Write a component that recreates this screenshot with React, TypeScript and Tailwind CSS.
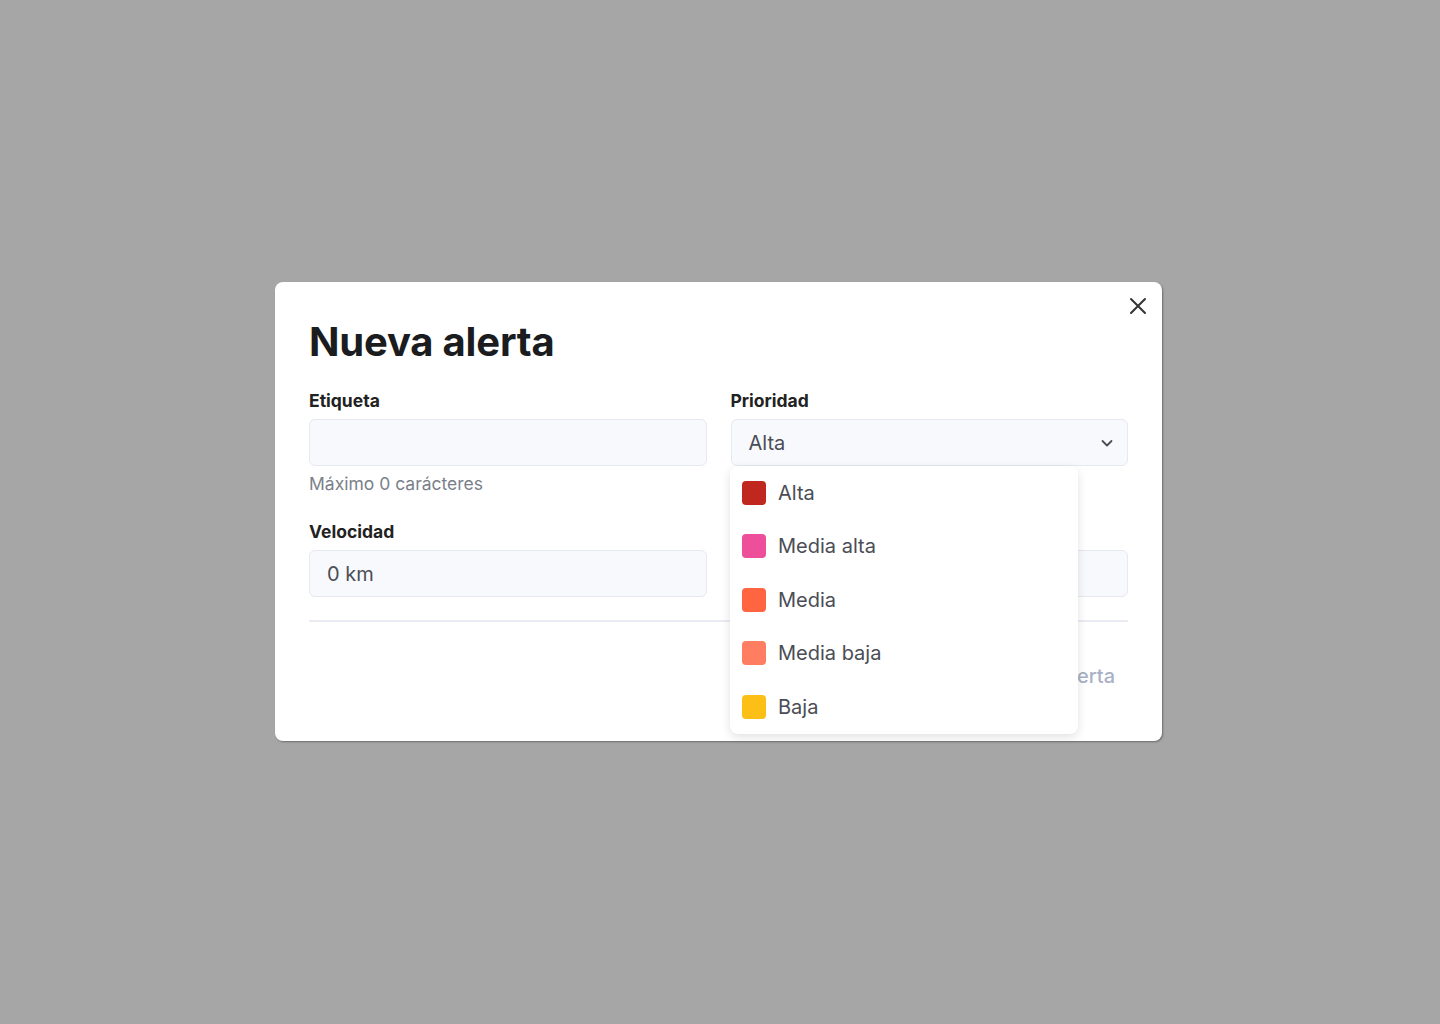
import React from "react";

const items = [
  { label: "Alta", color: "bg-[#c0271f]" },
  { label: "Media alta", color: "bg-[#ee4f9b]" },
  { label: "Media", color: "bg-[#ff6540]" },
  { label: "Media baja", color: "bg-[#ff7d61]" },
  { label: "Baja", color: "bg-[#fbbf16]" },
];

export default function App() {
  return (
    <div className="w-[1440px] h-[1024px] bg-[#a6a6a6] flex items-start justify-start pl-[275px] pt-[282px] font-['Inter',sans-serif]">
      <div className="relative w-[887px] h-[459px] bg-white rounded-[8px] shadow-[1px_1px_2px_rgba(0,0,0,0.35)] px-[34px] pt-[36px]">
        <button className="absolute right-[15px] top-[15px] text-[#333] ">
          <svg width="18" height="18" viewBox="0 0 18 18" fill="none" stroke="currentColor" strokeWidth="2" strokeLinecap="round">
            <path d="M2 2L16 16M16 2L2 16" />
          </svg>
        </button>
        <h1 className="text-[40px] leading-[48px] font-bold text-[#1b1c20] tracking-[-0.2px]">Nueva alerta</h1>
        <div className="grid grid-cols-2 gap-x-[24px] mt-[24px]">
          <div className="flex flex-col">
            <label className="text-[17.5px] leading-[22px] font-bold text-[#222]">Etiqueta</label>
            <div className="mt-[7px] h-[47px] rounded-[6px] border border-[#e6e9f2] bg-[#f8f9fc]" />
            <p className="mt-[6px] text-[17.5px] leading-[24px] text-[#7a7f8a]">Máximo 0 carácteres</p>
          </div>
          <div className="flex flex-col relative">
            <label className="text-[17.5px] leading-[22px] font-bold text-[#222]">Prioridad</label>
            <div className="mt-[7px] h-[47px] rounded-[6px] border border-[#e6e9f2] bg-[#f8f9fc] flex items-center justify-between pl-[17px] pr-[12px]">
              <span className="text-[20px] text-[#4a4d55]">Alta</span>
              <svg width="16" height="16" viewBox="0 0 16 16" fill="none" stroke="#4a4d55" strokeWidth="1.8" strokeLinecap="round" strokeLinejoin="round">
                <path d="M3.5 6l4.5 4.5L12.5 6" />
              </svg>
            </div>
          </div>
          <div className="flex flex-col mt-[25px]">
            <label className="text-[17.5px] leading-[22px] font-bold text-[#222]">Velocidad</label>
            <div className="mt-[7px] h-[47px] rounded-[6px] border border-[#e6e9f2] bg-[#f8f9fc] flex items-center pl-[17px]">
              <span className="text-[20px] text-[#4a4d55]">0 km</span>
            </div>
          </div>
          <div className="flex flex-col mt-[25px]">
            <div className="h-[22px]" />
            <div className="mt-[7px] h-[47px] rounded-[6px] border border-[#e6e9f2] bg-[#f8f9fc]" />
          </div>
        </div>
        <div className="mt-[23px] h-[2px] bg-[#e8ebf2]" />
        <div className="flex justify-end pt-[39px] pr-[13px]">
          <span className="text-[20px] font-medium text-[#a9b1c4]">Crear alerta</span>
        </div>
        <div className="absolute left-[455px] top-[184px] w-[348px] rounded-[8px] bg-white shadow-[0_3px_10px_rgba(0,0,0,0.12)]">
          {items.map((it) => (
            <div key={it.label} className="h-[53.5px] flex items-center gap-[12px] pl-[12px]">
              <span className={`w-[24px] h-[24px] rounded-[4px] ${it.color}`} />
              <span className="text-[20px] text-[#4a4d55]">{it.label}</span>
            </div>
          ))}
        </div>
      </div>
    </div>
  );
}
